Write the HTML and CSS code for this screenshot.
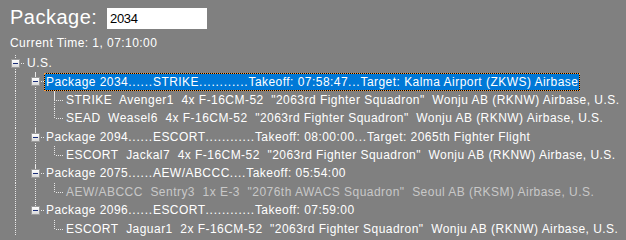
FILE: index.html
```html
<!DOCTYPE html>
<html>
<head>
<meta charset="utf-8">
<link rel="stylesheet" href="styles.css">
</head>
<body>
<div class="page">
  <div class="head">
    <span class="title">Package:</span>
    <div class="input">2034</div>
  </div>
  <div class="time">Current Time: 1, 07:10:00</div>
  <div class="tree">
    <div class="row">
      <span class="cell w20 self first more"><span class="box"></span></span>
      <span class="label l0">U.S.</span>
    </div>
    <div class="row">
      <span class="cell w20 pass"></span>
      <span class="cell w19 self more"><span class="box"></span></span>
      <span class="label sel">Package 2034<span class="dots">......</span>STRIKE<span class="dots">............</span>Takeoff: 07:58:47<span class="dots">...</span>Target: Kalma Airport (ZKWS) Airbase</span>
    </div>
    <div class="row">
      <span class="cell w20 pass"></span>
      <span class="cell w19 pass"></span>
      <span class="cell w20 self more"></span>
      <span class="label">STRIKE&nbsp; Avenger1&nbsp; 4x F-16CM-52&nbsp; "2063rd Fighter Squadron"&nbsp; Wonju AB (RKNW) Airbase, U.S.</span>
    </div>
    <div class="row">
      <span class="cell w20 pass"></span>
      <span class="cell w19 pass"></span>
      <span class="cell w20 self"></span>
      <span class="label">SEAD&nbsp; Weasel6&nbsp; 4x F-16CM-52&nbsp; "2063rd Fighter Squadron"&nbsp; Wonju AB (RKNW) Airbase, U.S.</span>
    </div>
    <div class="row">
      <span class="cell w20 pass"></span>
      <span class="cell w19 self more"><span class="box"></span></span>
      <span class="label">Package 2094<span class="dots">......</span>ESCORT<span class="dots">............</span>Takeoff: 08:00:00<span class="dots">...</span>Target: 2065th Fighter Flight</span>
    </div>
    <div class="row">
      <span class="cell w20 pass"></span>
      <span class="cell w19 pass"></span>
      <span class="cell w20 self"></span>
      <span class="label">ESCORT&nbsp; Jackal7&nbsp; 4x F-16CM-52&nbsp; "2063rd Fighter Squadron"&nbsp; Wonju AB (RKNW) Airbase, U.S.</span>
    </div>
    <div class="row">
      <span class="cell w20 pass"></span>
      <span class="cell w19 self more"><span class="box"></span></span>
      <span class="label">Package 2075<span class="dots">......</span>AEW/ABCCC<span class="dots">....</span>Takeoff: 05:54:00</span>
    </div>
    <div class="row">
      <span class="cell w20 pass"></span>
      <span class="cell w19 pass"></span>
      <span class="cell w20 self"></span>
      <span class="label dim">AEW/ABCCC&nbsp; Sentry3&nbsp; 1x E-3&nbsp; "2076th AWACS Squadron"&nbsp; Seoul AB (RKSM) Airbase, U.S.</span>
    </div>
    <div class="row">
      <span class="cell w20 pass"></span>
      <span class="cell w19 self"><span class="box"></span></span>
      <span class="label">Package 2096<span class="dots">......</span>ESCORT<span class="dots">............</span>Takeoff: 07:59:00</span>
    </div>
    <div class="row">
      <span class="cell w20 pass"></span>
      <span class="cell w19"></span>
      <span class="cell w20 self"></span>
      <span class="label">ESCORT&nbsp; Jaguar1&nbsp; 2x F-16CM-52&nbsp; "2063rd Fighter Squadron"&nbsp; Wonju AB (RKNW) Airbase, U.S.</span>
    </div>
  </div>
</div>
</body>
</html>
```
FILE: styles.css
```css
html, body {
  margin: 0;
  padding: 0;
  background: #808080;
  overflow: hidden;
}
.page {
  width: 626px;
  height: 236px;
  overflow: hidden;
  font-family: "Liberation Sans", Arial, sans-serif;
  color: #ffffff;
}
.head {
  display: flex;
  align-items: center;
  padding: 8px 0 0 10px;
  height: 21px;
}
.title {
  font-size: 20px;
  letter-spacing: 0.5px;
  line-height: 21px;
  width: 97px;
  position: relative;
  top: -1px;
}
.input {
  height: 21px;
  width: 100px;
  background: #ffffff;
  color: #000000;
  font-size: 13px;
  letter-spacing: -0.3px;
  line-height: 22px;
  padding-left: 3px;
  box-sizing: border-box;
}
.time {
  padding: 7px 0 0 10px;
  font-size: 12px;
  letter-spacing: 0.45px;
  line-height: 14px;
}
.tree {
  padding: 4px 0 0 5px;
  font-size: 12px;
  letter-spacing: 0.46px;
}
.row {
  display: flex;
  height: 18.4px;
  align-items: stretch;
  white-space: nowrap;
}
.cell {
  position: relative;
  flex: none;
}
.w20 { width: 20px; }
.w19 { width: 19px; }
.pass {
  background-image: linear-gradient(to bottom, #e8e8e8 50%, transparent 50%);
  background-size: 1px 2px;
  background-repeat: repeat-y;
  background-position: 10px 0;
}
.self::before {
  content: "";
  position: absolute;
  left: 10px;
  top: 0;
  width: 1px;
  height: 9px;
  background-image: linear-gradient(to bottom, #e8e8e8 50%, transparent 50%);
  background-size: 1px 2px;
}
.self.first::before { display: none; }
.self::after {
  content: "";
  position: absolute;
  left: 11px;
  right: 0;
  top: 9px;
  height: 1px;
  background-image: linear-gradient(to right, transparent 50%, #e8e8e8 50%);
  background-size: 2px 1px;
}
.self.more {
  background-image: linear-gradient(to bottom, #e8e8e8 50%, transparent 50%);
  background-size: 1px 2px;
  background-repeat: repeat-y;
  background-position: 10px 9px;
}
.box {
  position: absolute;
  left: 6px;
  top: 5px;
  width: 9px;
  height: 9px;
  box-sizing: border-box;
  border: 1px solid #9a9a9a;
  background: linear-gradient(to bottom, #ffffff, #d8d8d8);
  z-index: 2;
}
.box::after {
  content: "";
  position: absolute;
  left: 1px;
  top: 3px;
  width: 5px;
  height: 1px;
  background: #1b2f7a;
}
.label {
  line-height: 18px;
  padding: 0 2px;
  height: 18px;
}
.dots {
  letter-spacing: 0.78px;
}
.sel {
  color: #ffffff;
  border: 1px dotted #ff9c3a;
  background: linear-gradient(#0078d7, #0078d7) padding-box, #000000;
  line-height: 16px;
  height: 16px;
  padding: 0 1px;
  margin-top: 0.5px;
}
.dim {
  color: #c8c8c8;
}
```
